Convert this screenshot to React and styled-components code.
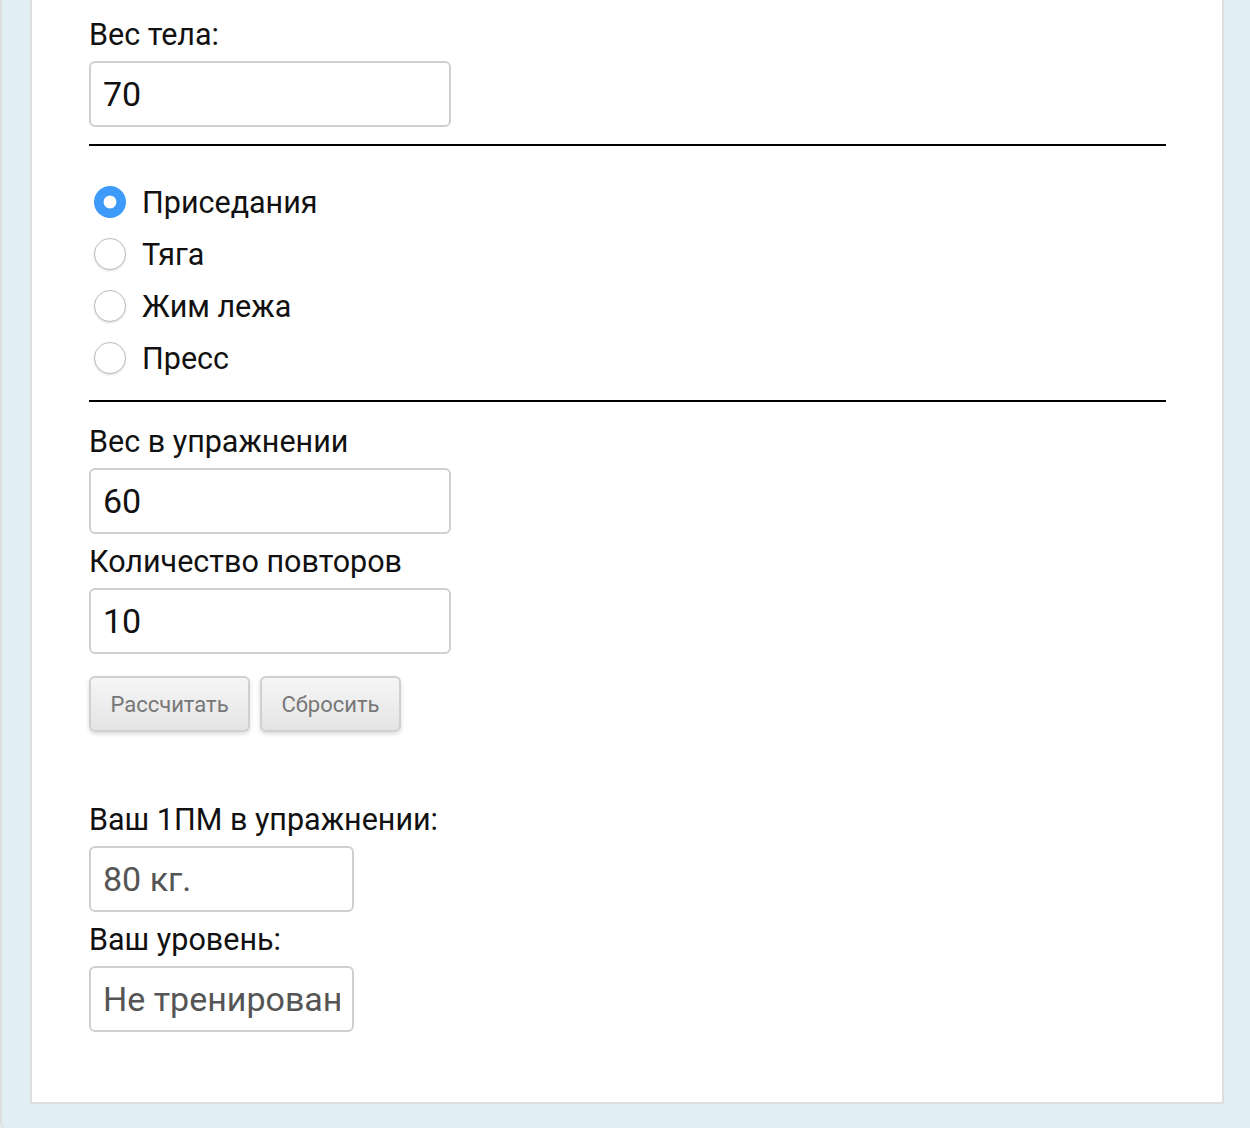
import React, { useState } from "react";
import styled, { createGlobalStyle } from "styled-components";

const GlobalStyle = createGlobalStyle`
  html, body {
    margin: 0;
    padding: 0;
    background: #e1eff5;
    font-family: Roboto, "Noto Sans", Arial, sans-serif;
  }
  * { box-sizing: border-box; }
`;

const Page = styled.div`
  min-height: 1128px;
  background: #e1eff5;
  border-left: 2px solid #dcdcdc;
  border-bottom-left-radius: 6px;
  padding: 0 26px 24px 28px;
`;

const Panel = styled.form`
  background: #fff;
  border: 2px solid #dedede;
  border-top: none;
  padding: 17px 56px 70px 57px;
`;

const Label = styled.label`
  display: block;
  font-size: 30.5px;
  line-height: 36px;
  color: #111;
  margin-top: ${(p) => p.$top || 0}px;
  margin-bottom: 8px;
`;

const Field = styled.input`
  display: block;
  width: ${(p) => p.$width || 362}px;
  height: 66px;
  padding: 0 12px;
  border: 2px solid #cfcfcf;
  border-radius: 6px;
  font-family: inherit;
  font-size: 34px;
  color: ${(p) => (p.readOnly ? "#555" : "#111")};
  background: #fff;
  outline: none;
  margin-bottom: ${(p) => p.$gap ?? 10}px;
`;

const Rule = styled.hr`
  border: none;
  height: 2px;
  background: #000;
  margin: 0;
`;

const RadioList = styled.div`
  display: flex;
  flex-direction: column;
  padding: 30px 0 16px 5px;
`;

const RadioRow = styled.label`
  display: flex;
  align-items: center;
  gap: 16px;
  height: 52px;
  font-size: 30.5px;
  color: #111;
  cursor: pointer;
`;

const Radio = styled.input`
  appearance: none;
  margin: 0;
  width: 32px;
  height: 32px;
  border-radius: 50%;
  border: 1px solid #bdbdbd;
  background: #fff;
  box-shadow: 0 1px 2px rgba(0, 0, 0, 0.14);
  &:checked {
    border: none;
    background: radial-gradient(circle, #fff 0 6px, #3d9af8 6.8px);
    box-shadow: none;
  }
`;

const Buttons = styled.div`
  display: flex;
  gap: 10px;
  margin-top: 22px;
  margin-bottom: 70px;
`;

const Button = styled.button`
  width: ${(p) => p.$width}px;
  height: 56px;
  border: 2px solid #d0d0d0;
  border-radius: 6px;
  background: linear-gradient(#f6f6f6, #e4e4e4);
  box-shadow: 0 2px 4px rgba(0, 0, 0, 0.15);
  color: #777;
  font-family: inherit;
  font-size: 22px;
  cursor: pointer;
`;

const exercises = ["Приседания", "Тяга", "Жим лежа", "Пресс"];

const App = () => {
  const [exercise, setExercise] = useState(exercises[0]);

  return (
    <>
      <GlobalStyle />
      <Page>
        <Panel onSubmit={(e) => e.preventDefault()}>
          <Label>Вес тела:</Label>
          <Field defaultValue="70" $gap={17} />
          <Rule />
          <RadioList>
            {exercises.map((name) => (
              <RadioRow key={name}>
                <Radio
                  type="radio"
                  name="exercise"
                  checked={exercise === name}
                  onChange={() => setExercise(name)}
                />
                {name}
              </RadioRow>
            ))}
          </RadioList>
          <Rule />
          <Label $top={22}>Вес в упражнении</Label>
          <Field defaultValue="60" />
          <Label>Количество повторов</Label>
          <Field defaultValue="10" $gap={0} />
          <Buttons>
            <Button type="button" $width={161}>Рассчитать</Button>
            <Button type="button" $width={141}>Сбросить</Button>
          </Buttons>
          <Label>Ваш 1ПМ в упражнении:</Label>
          <Field readOnly value="80 кг." $width={265} />
          <Label>Ваш уровень:</Label>
          <Field readOnly value="Не тренирован" $width={265} $gap={0} />
        </Panel>
      </Page>
    </>
  );
};

export default App;
